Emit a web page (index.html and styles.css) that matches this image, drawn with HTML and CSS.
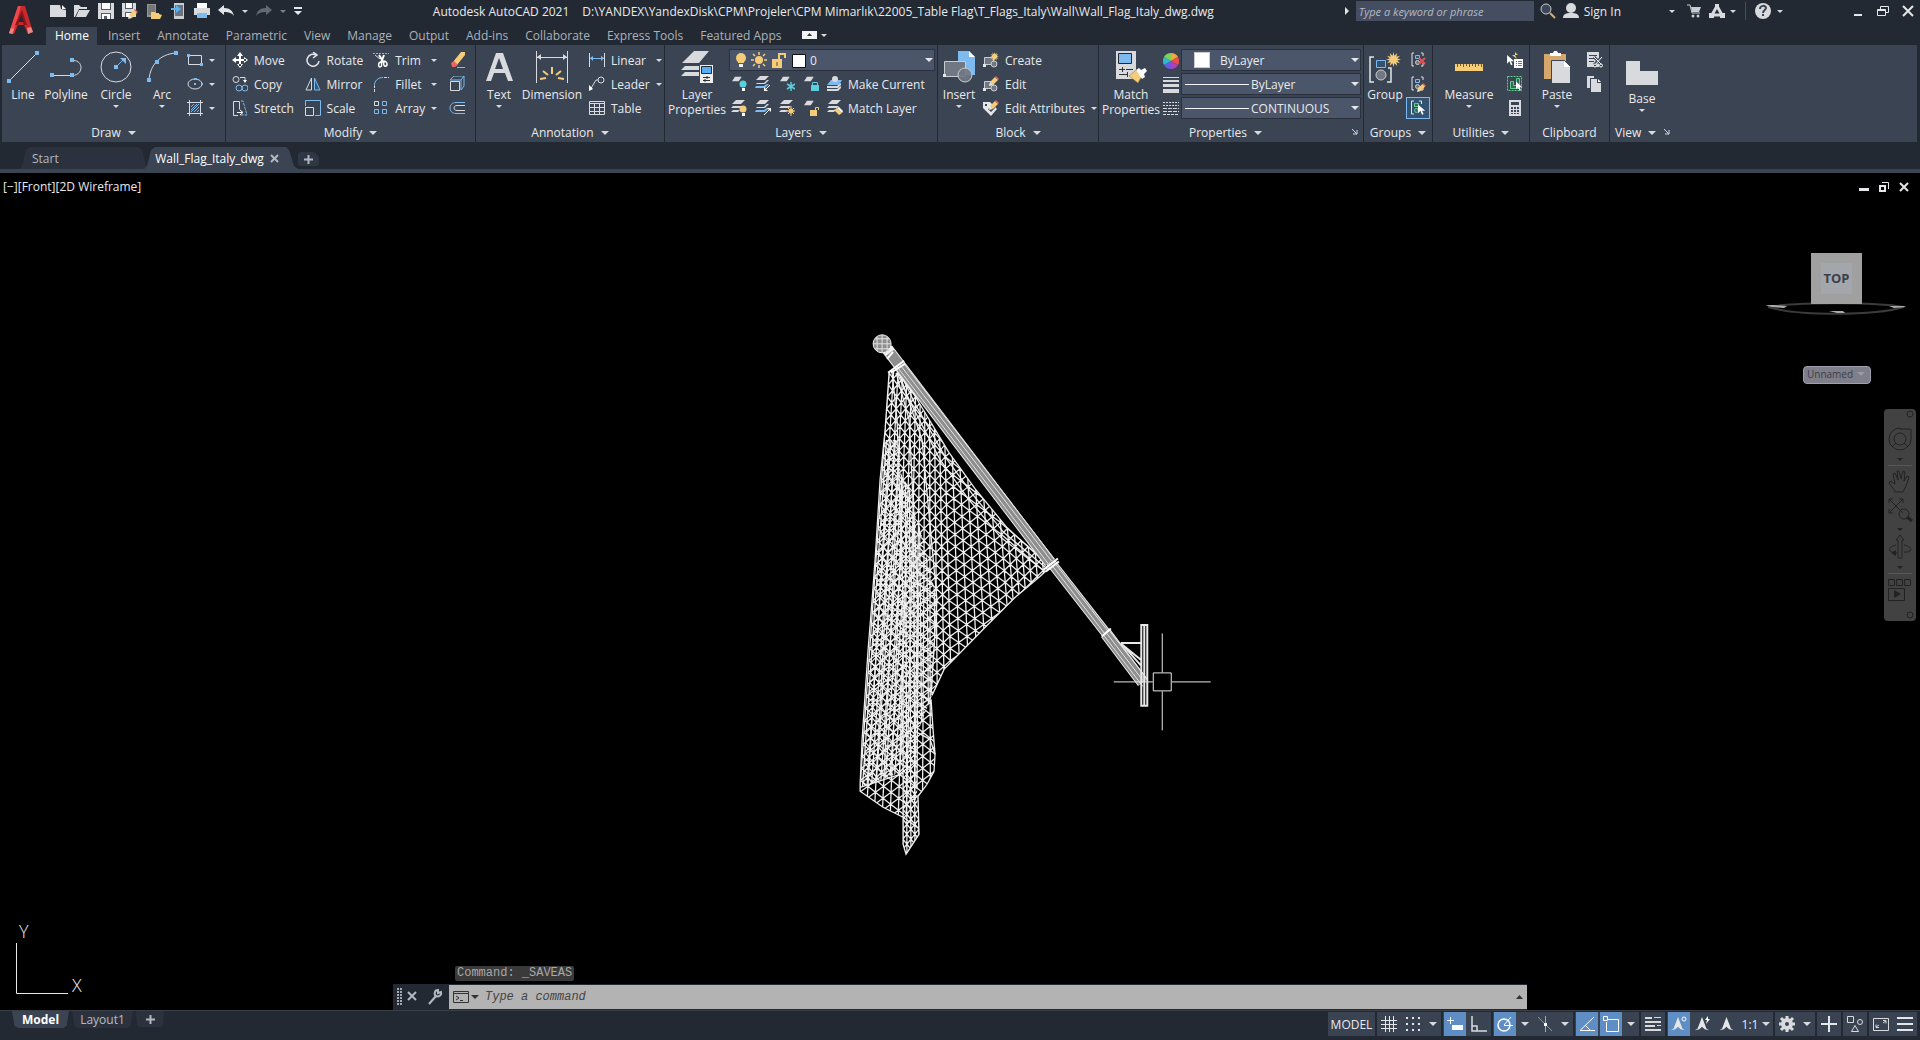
FILE: index.html
```html
<!DOCTYPE html>
<html lang="en">
<head>
<meta charset="utf-8">
<title>Autodesk AutoCAD 2021</title>
<link rel="stylesheet" href="styles.css">
</head>
<body>
<svg class="sprite" aria-hidden="true">
  <symbol id="sheet" viewBox="0 0 16 16"><path fill="#d8dade" d="M4 1h9L9 7H0z"/></symbol>
  <symbol id="stack" viewBox="0 0 16 16"><path fill="#d8dade" d="M5 0h9l-4 4H1zM2 6h10l-2 2H0zM2 10h7l-2 2H0z"/></symbol>
  <symbol id="stackblue" viewBox="0 0 16 16"><path fill="#d8dade" d="M5 0h9l-4 4H1z"/><path fill="#d8dade" d="M12 4h2l-4 4H1l1-1h7z"/><path fill="#7cbaf0" d="M12 8h2l-4 4H0l1-2h8z"/></symbol>
  <symbol id="pencil" viewBox="0 0 10 10"><path fill="#f5cd79" d="M1 6l5-5 3 3-5 5z"/><path fill="#ea6560" d="M6 1l1-1 3 3-1 1z"/><path fill="#f3ead6" d="M1 6l3 3-4 1z"/></symbol>
  <symbol id="cursor" viewBox="0 0 10 14"><path fill="#fff" d="M0 0v11l3-3 2 5 2-1-2-4h4z"/></symbol>
  <symbol id="burst" viewBox="0 0 16 16"><path fill="#f5cd79" d="M8 0l1 4 3-3-1 4 4-1-3 3 4 1-4 1 3 3-4-1 1 4-3-3-1 4-1-4-3 3 1-4-4 1 3-3-4-1 4-1-3-3 4 1-1-4 3 3z"/></symbol>
  <symbol id="group" viewBox="0 0 16 16"><path fill="none" stroke="#e4e6e9" d="M4 1H2v13h2M11 1h2v3M13 11v3h-2"/><path fill="#34526f" stroke="#7cbaf0" d="M5.500 3.500h4v3h-4z"/><circle cx="7.500" cy="10.500" r="2" fill="#777" stroke="#ccc"/></symbol>
  <symbol id="block" viewBox="0 0 16 16"><path fill="#727883" stroke="#c9ccd1" d="M1.500 5.500h9v7h-9z"/><circle cx="11" cy="12" r="3" fill="#727883" stroke="#c9ccd1"/><path fill="#e4e6e9" d="M0 12h3v3H0z"/></symbol>
  <symbol id="acad" viewBox="0 0 16 16"><path fill="#e4e6e9" d="M8 0l5 13 3 2-5-1-3-3-3 3-5 1 3-2z"/></symbol>
  <symbol id="launch" viewBox="0 0 6 6"><path fill="none" stroke="#d8dade" d="M0 0l5 5M5 1v4H1"/></symbol>
</svg>

<header class="top">
  <button class="logo" aria-label="Application menu">
    <svg width="28" height="30" viewBox="0 0 28 30"><path fill="#c9282d" d="M10 0h7l8 26-5 2-4-9h-6L6 28l-5-1z"/><path fill="#ec4a4e" d="M10 0h3L5 28l-4-1z"/><path fill="#8f1519" d="M14 4l5 15h-3l-3-7-3 7H7z"/><path fill="#222933" d="M13 9l3 7h-5z"/><path fill="#e88884" d="M3 22l3 1-2 5-3-1zM19 22l4-1 2 5-5 2z"/></svg>
  </button>
  <div class="titlebar">
    <div class="quick">
      <button aria-label="New"><svg width="16" height="16"><path fill="#d8dade" d="M0 2h10l1 4 5 1v7H0z"/><path fill="#fff" d="M12 2l4 4h-4z"/></svg></button>
      <button aria-label="Open"><svg width="16" height="16"><path fill="#d8dade" d="M0 2h5l2 2h6v2H5l-4 8H0z"/><path fill="#d8dade" d="M5 7h11l-4 7H2z"/></svg></button>
      <button aria-label="Save"><svg width="16" height="16"><path fill="#d8dade" d="M0 0h16v16H0z"/><path fill="#555c68" d="M3 0h10v7H3zM3 10h10v6H3z"/><path fill="#fff" d="M4 0h8v6H4zM4 11h8v5H4z"/><path fill="#555c68" d="M6 13h3v3H6z"/></svg></button>
      <button aria-label="Save as"><svg width="16" height="16"><path fill="#d8dade" d="M0 0h14v14H0z"/><path fill="#555c68" d="M3 0h8v6H3zM3 9h8v5H3z"/><path fill="#fff" d="M4 0h6v5H4zM4 10h5v4H4z"/><use href="#pencil" x="6" y="6" width="10" height="10"/></svg></button>
      <button aria-label="Open from web"><svg width="16" height="16"><path fill="#98958e" d="M1 1h9v13H1z"/><path fill="#777" d="M2 2h7v10H2z"/><path fill="#f5cd79" d="M5 9h4l1 1h3v1l3 1-2 4H5z"/></svg></button>
      <button aria-label="Save to web"><svg width="16" height="16"><path fill="#c9ccd1" d="M4 0h10v16H4z"/><path fill="#6c727c" d="M5 2h8v11H5z"/><path fill="#56b4f5" d="M1 5h5V2l5 4-5 4V7H1z"/></svg></button>
      <button aria-label="Plot"><svg width="16" height="16"><path fill="#fff" d="M3 0h10v5H3z"/><path fill="#d8dade" d="M0 5h16v7h-3v-2H3v2H0z"/><path fill="#7cbaf0" d="M3 10h10v5H3z"/></svg></button>
      <button aria-label="Undo"><svg width="16" height="16"><path fill="#e4e6e9" d="M6 2v3c6 0 9 3 10 8-2-3-5-4-10-4v3L0 7z"/></svg></button>
      <button class="drop" aria-label="Undo list"><i class="caret"></i></button>
      <button aria-label="Redo"><svg width="16" height="16"><path fill="#626973" d="M10 2v3C4 5 1 8 0 13c2-3 5-4 10-4v3l6-5z"/></svg></button>
      <button class="drop" aria-label="Redo list"><i class="caret dim"></i></button>
      <button aria-label="Customize quick access"><svg width="8" height="8"><path fill="#e4e6e9" d="M0 0h8v2H0zM0 4h8L4 8z"/></svg></button>
    </div>
    <h1 class="doc-title"><span>Autodesk AutoCAD 2021</span><span>D:\YANDEX\YandexDisk\CPM\Projeler\CPM Mimarlık\22005_Table Flag\T_Flags_Italy\Wall\Wall_Flag_Italy_dwg.dwg</span></h1>
    <div class="account">
      <svg width="4" height="8"><path fill="#e4e6e9" d="M0 0l4 4-4 4z"/></svg>
      <input class="search" type="text" aria-label="Search" placeholder="Type a keyword or phrase">
      <button class="find" aria-label="Find"><svg width="16" height="16"><circle cx="6" cy="6" r="5" fill="#3b4656" stroke="#c9ccd1"/><path stroke="#cdb184" stroke-width="2" d="M10 10l5 5"/></svg></button>
      <button class="sign"><svg width="16" height="16"><circle cx="8" cy="5" r="5" fill="#d8dade"/><path fill="#d8dade" d="M0 15c0-4 3-5 8-5s8 1 8 5z"/></svg>Sign In</button>
      <button class="drop signdrop" aria-label="Account list"><i class="caret"></i></button>
      <button class="cart" aria-label="App store"><svg width="14" height="14"><path fill="none" stroke="#c9ccd1" d="M0 1h3l2 8h8"/><path fill="#c9ccd1" d="M4 3h10l-2 5H5z"/><circle cx="6" cy="12" r="1.500" fill="#c9ccd1"/><circle cx="11" cy="12" r="1.500" fill="#c9ccd1"/></svg></button>
      <button class="auto" aria-label="Autodesk account"><svg width="16" height="14"><path fill="none" stroke="#d8dade" stroke-width="3" d="M8 2L3 11h10z"/><path fill="#d8dade" d="M0 9h5v5H0zM11 9h5v5h-5zM6 0h4v4H6z"/></svg></button>
      <button class="drop" aria-label="Autodesk account list"><i class="caret"></i></button>
      <span class="split"></span>
      <button aria-label="Help"><svg width="16" height="16"><circle cx="8" cy="8" r="8" fill="#d8dade"/><path fill="none" stroke="#3b4453" stroke-width="2" d="M5 6c0-4 6-4 6-1 0 2-3 2-3 5M8 11v2"/></svg></button>
      <button class="drop" aria-label="Help list"><i class="caret"></i></button>
    </div>
    <div class="window">
      <button aria-label="Minimize"><svg width="12" height="12"><path fill="#e4e6e9" d="M2 9h8v2H2z"/></svg></button>
      <button aria-label="Restore"><svg width="12" height="12"><path fill="none" stroke="#e4e6e9" d="M.500 4.500h8v6h-8zM.500 5.500h8M3.500 4V1.500h8v6H9"/></svg></button>
      <button aria-label="Close"><svg width="12" height="12"><path stroke="#e4e6e9" stroke-width="2" d="M1 1l10 10M11 1L1 11"/></svg></button>
    </div>
  </div>
  <nav class="tabs">
    <button class="on">Home</button><button>Insert</button><button>Annotate</button><button>Parametric</button><button>View</button><button>Manage</button><button>Output</button><button>Add-ins</button><button>Collaborate</button><button>Express Tools</button><button>Featured Apps</button>
    <button class="fold" aria-label="Minimize ribbon"><svg width="15" height="8"><path fill="#f2f3f4" d="M0 0h15v8H0z"/><path fill="#333" d="M5 5h5L7.500 2z"/></svg><i class="caret"></i></button>
  </nav>
</header>

<main class="ribbon">
  <section class="panel draw">
    <div class="tools">
      <button class="big w42"><svg width="32" height="32"><path stroke="#d8dade" d="M2 30L30 2"/><path fill="#7cbaf0" d="M0 28h4v4H0zM28 0h4v4h-4z"/></svg>Line</button>
      <button class="big w44"><svg width="32" height="32"><path fill="none" stroke="#d8dade" d="M2 24.500h20M22 9.500c12-1 12 15 0 15"/><path fill="#7cbaf0" d="M0 22h4v4H0zM20 22h4v4h-4zM20 7h4v4h-4z"/></svg>Polyline</button>
      <button class="big w56"><svg width="32" height="32"><circle cx="16" cy="16" r="15" fill="none" stroke="#d8dade"/><path fill="#7cbaf0" d="M14 14h4v4h-4zM20 7h6v6z"/><path stroke="#7cbaf0" d="M16 16l8-8"/></svg>Circle<i class="caret"></i></button>
      <button class="big w36"><svg width="32" height="32"><path fill="none" stroke="#d8dade" d="M3 29C4 14 14 3 30 2"/><path fill="#7cbaf0" d="M1 27h4v4H1zM9 9h4v4H9zM28 0h4v4h-4z"/></svg>Arc<i class="caret"></i></button>
      <div class="col c31">
        <button class="sm ico" aria-label="Rectangle"><svg width="16" height="16"><path fill="none" stroke="#d8dade" d="M1.500 3.500h13v9h-13z"/><path fill="#7cbaf0" d="M0 2h3v3H0zM13 11h3v3h-3z"/></svg><i class="caret"></i></button>
        <button class="sm ico" aria-label="Ellipse"><svg width="16" height="16"><ellipse cx="8" cy="8" rx="7" ry="5" fill="none" stroke="#d8dade"/><path fill="#7cbaf0" d="M7 7h2v2H7zM7 2h3v2H7zM14 7h2v2h-2z"/></svg><i class="caret"></i></button>
        <button class="sm ico" aria-label="Hatch"><svg width="16" height="16"><path fill="none" stroke="#d8dade" d="M2.500 0v16M13.500 0v16M0 2.500h16M0 13.500h16"/><path stroke="#7cbaf0" d="M4 7l3-3M4 10l6-6M4 12l8-8M7 12l5-5M10 12l2-2"/></svg><i class="caret"></i></button>
      </div>
    </div>
    <button class="name">Draw<i class="caret lg"></i></button>
  </section>

  <section class="panel modify">
    <div class="tools">
      <div class="col c73">
        <button class="sm"><svg width="16" height="16"><path fill="#fff" d="M7 2h2v12H7zM2 7h12v2H2zM8 0l3 4H5zM8 16l3-4H5zM0 8l4-3v6zM16 8l-4-3v6z"/></svg>Move</button>
        <button class="sm"><svg width="16" height="16"><circle cx="4" cy="3.500" r="3" fill="none" stroke="#d8dade"/><path fill="none" stroke="#d8dade" d="M8 1.500h5v3"/><path fill="#fff" d="M11 4h4l-2 3z"/><circle cx="7" cy="12" r="3" fill="none" stroke="#7cbaf0"/><circle cx="13" cy="12" r="3" fill="none" stroke="#7cbaf0"/></svg>Copy</button>
        <button class="sm"><svg width="16" height="16"><path fill="none" stroke="#d8dade" d="M6 15.500H1.500V1.500h6v8"/><path fill="none" stroke="#7cbaf0" stroke-dasharray="3 1" d="M9 1h2l4 14H8"/><path fill="none" stroke="#fff" d="M5 12.500h5M8 10l3 2.500L8 15"/></svg>Stretch</button>
      </div>
      <div class="col c68">
        <button class="sm"><svg width="16" height="16"><path fill="none" stroke="#e4e6e9" stroke-width="1.500" d="M11 3A6 6 0 1 0 14 9M8 0l4 3-4 3"/></svg>Rotate</button>
        <button class="sm"><svg width="16" height="16"><path fill="none" stroke="#d8dade" d="M6.500 2v12H1z"/><path fill="#33597c" stroke="#7cbaf0" d="M9.500 2v12H15z"/></svg>Mirror</button>
        <button class="sm"><svg width="16" height="16"><path fill="none" stroke="#7cbaf0" d="M.500 6V.500h15v15H10"/><path fill="none" stroke="#d8dade" d="M.500 7.500h8v8h-8z"/></svg>Scale</button>
      </div>
      <div class="col c67">
        <button class="sm"><svg width="16" height="16"><path stroke="#7cbaf0" stroke-dasharray="2 1" d="M0 1.500h16"/><path stroke="#fff" stroke-width="2" d="M6 3l5 8M11 3l-3 8"/><path fill="none" stroke="#fff" stroke-width="1.500" d="M8 10c-3 0-3 5-1 5s2-3 1-5M11 9c3 0 4 4 2 5s-3-2-2-5"/><path stroke="#d8dade" d="M2 3l5 4"/></svg>Trim<i class="caret"></i></button>
        <button class="sm"><svg width="16" height="16"><path fill="none" stroke="#7cbaf0" d="M1.500 10C1 5 5 1.500 10 1.500"/><path stroke="#d8dade" stroke-dasharray="3 1" d="M1.500 16v-6M11 1.500h5"/></svg>Fillet<i class="caret"></i></button>
        <button class="sm"><svg width="16" height="16"><path fill="none" stroke="#d8dade" d="M1.500 1.500h4v4h-4z"/><path fill="none" stroke="#7cbaf0" d="M9.500 1.500h4v4h-4zM1.500 9.500h4v4h-4zM9.500 9.500h4v4h-4z"/></svg>Array<i class="caret"></i></button>
      </div>
      <div class="col c26">
        <button class="sm ico" aria-label="Erase"><svg width="16" height="16"><path fill="#f5cd79" d="M4 10L12 0h4v3L8 13z"/><path fill="#ea6560" d="M2 11l3-2 4 4-3 2H3z"/><path stroke="#7cbaf0" d="M8 15.500h8"/></svg></button>
        <button class="sm ico" aria-label="Explode"><svg width="16" height="16"><path fill="none" stroke="#7cbaf0" d="M1 4l4-4h10v10l-3 4M1 4h11v10M12 4l3-4"/><path fill="#3b4453" stroke="#d8dade" d="M1.500 5.500h9v9h-9z"/></svg></button>
        <button class="sm ico" aria-label="Offset"><svg width="16" height="16"><path fill="none" stroke="#7cbaf0" d="M16 2.500H7c-8 0-8 11 0 11h9"/><path fill="none" stroke="#d8dade" d="M16 5.500H8c-4 0-4 5 0 5h8"/></svg></button>
      </div>
    </div>
    <button class="name">Modify<i class="caret lg"></i></button>
  </section>

  <section class="panel annotation">
    <div class="tools">
      <button class="big w46"><svg width="32" height="32"><path fill="#d8dade" fill-rule="evenodd" d="M13 2h7l10 28h-5l-3-8H11l-3 8H3zM16 7l-4 11h8z"/></svg>Text<i class="caret"></i></button>
      <button class="big w60"><svg width="32" height="32"><path stroke="#d8dade" d="M.500 0v32M31.500 0v32M1 6.500h30"/><path fill="#d8dade" d="M1 6l4-3v6zM31 6l-4-3v6z"/><path stroke="#f5cd79" stroke-width="2" d="M4 28l6-1M7 20l5 4M16 16v7M25 20l-5 4M28 28l-6-1"/></svg>Dimension</button>
      <div class="col c76">
        <button class="sm"><svg width="16" height="16"><path stroke="#d8dade" d="M.500 1v14M15.500 1v14"/><path stroke="#7cbaf0" d="M1 6.500h14"/><path fill="#7cbaf0" d="M1 6l3-2v5zM15 6l-3-2v5z"/></svg>Linear<i class="caret"></i></button>
        <button class="sm"><svg width="16" height="16"><circle cx="12" cy="4" r="3" fill="none" stroke="#d8dade"/><path fill="none" stroke="#d8dade" d="M9 4H7l-6 10"/><path fill="#fff" d="M0 15V9l4 4z"/></svg>Leader<i class="caret"></i></button>
        <button class="sm"><svg width="16" height="16"><path fill="none" stroke="#d8dade" d="M.500 1.500h15v13H.500zM0 3.500h16M0 7.500h16M0 11.500h16M5.500 4v11M10.500 4v11"/></svg>Table</button>
      </div>
    </div>
    <button class="name">Annotation<i class="caret lg"></i></button>
  </section>

  <section class="panel layers">
    <div class="tools">
      <button class="big w64"><svg width="32" height="32"><path fill="#d8dade" d="M13 0h15L18 12H1zM4 15h14v4H0zM4 21h14v4H0z"/><path fill="#eee" d="M19 14h13v18H19z"/><path fill="#56aef5" stroke="#222933" d="M20.500 15.500h10v7h-10z"/><path stroke="#333" d="M22 26.500h7M22 29.500h7M26 25v3M24 28v3"/></svg>Layer<br>Properties</button>
      <div class="stacked">
        <label class="combo wide"><svg width="78" height="20" viewBox="0 0 78 20"><circle cx="11" cy="8" r="5" fill="#f5cd79"/><path fill="#f5cd79" d="M8 10h6v3H8z"/><path fill="#eee" d="M9 14h4v3H9z"/><circle cx="29" cy="10" r="4" fill="#f5cd79"/><path stroke="#f5cd79" stroke-width="1.500" d="M29 2v3M29 15v3M21 10h3M34 10h3M23 4l2 2M35 4l-2 2M23 16l2-2M35 16l-2-2"/><path fill="#f5cd79" d="M42 9h10v9H42z"/><path fill="none" stroke="#f5cd79" stroke-width="2" d="M49 9V4h6v4"/><path fill="#fff" stroke="#111" d="M62.500 4.500h13v13h-13z"/><path stroke="#5b4a20" d="M47 12v4"/></svg><select aria-label="Layer"><option>0</option></select></label>
        <div class="strip">
          <button aria-label="Layer off"><svg width="16" height="16"><use href="#sheet" width="14" height="12"/><circle cx="12" cy="8" r="3.500" fill="#5bd0dc"/><path fill="#fff" d="M11 12h3v3h-3z"/></svg></button>
          <button aria-label="Isolate"><svg width="16" height="16"><use href="#stackblue" width="16" height="16"/><path stroke="#fff" d="M15 9l-5 5"/><path fill="#fff" d="M9 15v-4l4 4z"/></svg></button>
          <button aria-label="Freeze"><svg width="16" height="16"><use href="#sheet" width="14" height="12"/><path stroke="#5bd0dc" stroke-width="1.500" d="M12 6v9M8 8l8 5M8 13l8-5"/></svg></button>
          <button aria-label="Lock layer"><svg width="16" height="16"><use href="#sheet" width="14" height="12"/><path fill="#5bd0dc" d="M8 9h8v6H8z"/><path fill="none" stroke="#5bd0dc" d="M9.500 9V6.500h5V9"/></svg></button>
          <button class="txt"><svg width="16" height="16"><path fill="#7cbaf0" d="M4 4h11l-3 5H0z"/><path fill="#d8dade" d="M0 10h10l4-3v2l-3 3H0zM0 13h10l4-3v2l-3 3H0z"/><circle cx="8" cy="3" r="3" fill="#d8dade"/></svg>Make Current</button>
        </div>
        <div class="strip">
          <button aria-label="Turn all on"><svg width="16" height="16"><use href="#stack" width="16" height="16"/><circle cx="12" cy="9" r="3.500" fill="#f5cd79"/><path fill="#fff" d="M11 13h3v3h-3z"/></svg></button>
          <button aria-label="Unisolate"><svg width="16" height="16"><use href="#stackblue" width="16" height="16"/><path stroke="#fff" d="M9 15l5-5"/><path fill="#fff" d="M16 8v4l-4-4z"/></svg></button>
          <button aria-label="Thaw"><svg width="16" height="16"><use href="#stack" width="16" height="16"/><circle cx="12" cy="11" r="2.500" fill="#f5cd79"/><path stroke="#f5cd79" d="M12 6v10M7 11h9M9 8l6 6M9 14l6-6"/></svg></button>
          <button aria-label="Unlock layer"><svg width="16" height="16"><use href="#sheet" width="14" height="12"/><path fill="#f5cd79" d="M7 10h7v6H7z"/><path fill="none" stroke="#f5cd79" d="M12.500 10V7.500h3V10"/></svg></button>
          <button class="txt"><svg width="16" height="16"><use href="#stack" width="16" height="16"/><path fill="#f5cd79" d="M7 10l5 5 3-2-5-5z"/><path fill="#fff" d="M10 8l2-1 4 4-1 2z"/></svg>Match Layer</button>
        </div>
      </div>
    </div>
    <button class="name">Layers<i class="caret lg"></i></button>
  </section>

  <section class="panel blocks">
    <div class="tools">
      <button class="big w42"><svg width="32" height="32"><path fill="#7cbaf0" d="M15 0h11l6 6v18H15z"/><path fill="#fff" d="M26 0l6 6h-6z"/><path fill="#727883" stroke="#c9ccd1" d="M1.500 10.500h21v15h-21z"/><circle cx="22" cy="24" r="7" fill="#727883" fill-opacity=".9" stroke="#c9ccd1"/><path fill="#e4e6e9" d="M0 23h3v3H0z"/></svg>Insert<i class="caret"></i></button>
      <div class="col c115">
        <button class="sm"><svg width="16" height="16"><use href="#block" width="16" height="16"/><use href="#burst" x="7" y="0" width="9" height="9"/></svg>Create</button>
        <button class="sm"><svg width="16" height="16"><use href="#block" width="16" height="16"/><use href="#pencil" x="6" y="0" width="10" height="10"/></svg>Edit</button>
        <button class="sm"><svg width="16" height="16"><path fill="#e4e6e9" d="M0 2h7l7 7-6 7-8-8z"/><path fill="#3b4453" d="M2 4h2v2H2zM5 9l3 3 4-4-1-2z"/><use href="#pencil" x="6" y="0" width="10" height="10"/></svg>Edit Attributes<i class="caret"></i></button>
      </div>
    </div>
    <button class="name">Block<i class="caret lg"></i></button>
  </section>

  <section class="panel props">
    <div class="tools">
      <button class="big w64"><svg width="32" height="32"><path fill="#d8dade" d="M1 0h20v28H1z"/><path fill="#7cbaf0" stroke="#222933" d="M3.500 2.500h13v10h-13z"/><path stroke="#333" d="M4 18.500h6M11 18.500h7M4 23.500h9M7.500 16v5M12.500 21v5"/><path fill="#f5cd79" stroke="#8d6b35" stroke-width=".5" d="M14 25l7-6 6 6-4 7z"/><path fill="#fff" d="M21 19l3-2 2 2 4-2 2 3-3 3 1 3-3 2z"/></svg>Match<br>Properties</button>
      <div class="icons">
        <svg width="16" height="16"><path fill="#f4a53c" d="M8 8V0a8 8 0 0 1 7 4z"/><path fill="#e94f4f" d="M8 8l7-4a8 8 0 0 1 0 8z"/><path fill="#b03fb5" d="M8 8l7 4a8 8 0 0 1-7 4z"/><path fill="#6f56e0" d="M8 8v8a8 8 0 0 1-7-4z"/><path fill="#2fb7cf" d="M8 8l-7 4a8 8 0 0 1 0-8z"/><path fill="#7fcf5b" d="M8 8L1 4a8 8 0 0 1 7-4z"/></svg>
        <svg width="16" height="16"><path fill="#d8dade" d="M0 0h16v1H0zM0 3h16v2H0zM0 7h16v3H0zM0 12h16v4H0z"/></svg>
        <svg width="16" height="16"><path stroke="#d8dade" stroke-dasharray="2 1" d="M0 1.500h16M0 4.500h16"/><path stroke="#d8dade" stroke-dasharray="4 1" d="M0 7.500h16M0 10.500h16"/><path stroke="#d8dade" stroke-dasharray="3 1" d="M0 13.500h16"/></svg>
      </div>
      <div class="stacked selects">
        <label class="combo"><span class="chip"></span><select aria-label="Object color"><option>ByLayer</option></select></label>
        <label class="combo"><span class="rule"></span><select aria-label="Lineweight"><option>ByLayer</option></select></label>
        <label class="combo"><span class="rule"></span><select aria-label="Linetype"><option>CONTINUOUS</option></select></label>
      </div>
    </div>
    <div class="foot"><button class="name">Properties<i class="caret lg"></i></button><button class="launch" aria-label="Properties palette"><svg width="6" height="6"><use href="#launch"/></svg></button></div>
  </section>

  <section class="panel groups">
    <div class="tools">
      <button class="big w42"><svg width="32" height="32"><path fill="none" stroke="#e4e6e9" stroke-width="1.500" d="M5 6H1v25h4M19 17h3v14h-4"/><path fill="#34526f" stroke="#7cbaf0" d="M7.500 9.500h9v7h-9z"/><circle cx="12" cy="24" r="5" fill="#727883" stroke="#c9ccd1"/><use href="#burst" x="17" y="1" width="15" height="15"/></svg>Group</button>
      <div class="col c26">
        <button class="sm ico" aria-label="Ungroup"><svg width="16" height="16"><use href="#group" width="16" height="16"/><path stroke="#ea4f4f" stroke-width="2" d="M9 6l6 6M15 6l-6 6"/></svg></button>
        <button class="sm ico" aria-label="Group edit"><svg width="16" height="16"><use href="#group" width="16" height="16"/><use href="#pencil" x="7" y="7" width="9" height="9"/></svg></button>
        <button class="sm ico on" aria-label="Group selection"><svg width="16" height="16"><path fill="none" stroke="#e4e6e9" d="M4 1H1.500v13H4M9 1h2.500v3"/><path fill="#2f6b55" stroke="#5fcf8d" d="M4.500 3.500h4v3h-4z"/><circle cx="6.500" cy="10.500" r="2" fill="#2f6b55" stroke="#5fcf8d"/><use href="#cursor" x="8" y="4" width="8" height="12"/></svg></button>
      </div>
    </div>
    <button class="name">Groups<i class="caret lg"></i></button>
  </section>

  <section class="panel utils">
    <div class="tools">
      <button class="big w72"><svg width="32" height="32"><path fill="#f5cd79" d="M2 13h28v7H2z"/><path stroke="#6b5a34" d="M4.500 13v3M7.500 13v2M10.500 13v3M13.500 13v2M16.500 13v3M19.500 13v2M22.500 13v3M25.500 13v2M28.500 13v3"/></svg>Measure<i class="caret"></i></button>
      <div class="col c24">
        <button class="sm ico" aria-label="Quick select"><svg width="16" height="16"><path fill="#f5cd79" d="M8 0l3 3h-3l2 4-5-4h3z"/><use href="#cursor" x="0" y="3" width="8" height="11"/><path fill="#fff" d="M7 7h9v9H7z"/><path stroke="#3d7fc4" d="M9 9.500h1M9 11.500h1M9 13.500h1M11 9.500h4M11 11.500h4M11 13.500h4"/></svg></button>
        <button class="sm ico" aria-label="Select all"><svg width="16" height="16"><path fill="none" stroke="#5fcf8d" stroke-dasharray="2 1" d="M.500 .500h14v14H.500z"/><path fill="#2f6b55" stroke="#5fcf8d" d="M3.500 5.500h3v4h3v-7h3v10h-9z"/><use href="#cursor" x="9" y="5" width="7" height="11"/></svg></button>
        <button class="sm ico" aria-label="Calculator"><svg width="16" height="16"><path fill="#d8dade" d="M2 0h12v16H2z"/><path fill="#3b4453" d="M4 2h8v3H4zM4 7h2v2H4zM7 7h2v2H7zM10 7h2v2h-2zM4 10h2v2H4zM7 10h2v2H7zM10 10h2v2h-2zM4 13h2v1H4zM7 13h2v1H7zM10 13h2v1h-2z"/></svg></button>
      </div>
    </div>
    <button class="name">Utilities<i class="caret lg"></i></button>
  </section>

  <section class="panel clip">
    <div class="tools">
      <button class="big w54"><svg width="32" height="32"><path fill="#d6a76c" d="M3 3h22v25H3z"/><path fill="#fff" d="M9 2h3l1-2h3l1 2h3v3H9z"/><path fill="#d8dade" stroke="#3b4453" d="M10.500 9.500h13l6 6v17h-19z"/><path fill="#fff" d="M23 10l6 6h-6z"/></svg>Paste<i class="caret"></i></button>
      <div class="col c24">
        <button class="sm ico" aria-label="Cut"><svg width="16" height="16"><path fill="#d8dade" d="M0 0h12v15H0z"/><path stroke="#3b4453" d="M2 3.500h8M2 6.500h5M2 9.500h5"/><path stroke="#3b4453" stroke-width="3" d="M7 5l8 8M15 5l-8 8"/><path stroke="#fff" d="M7 5l7 7M15 5l-7 8"/><circle cx="8" cy="13.500" r="1.500" fill="#3b4453" stroke="#fff"/><circle cx="14" cy="13.500" r="1.500" fill="#3b4453" stroke="#fff"/></svg></button>
        <button class="sm ico" aria-label="Copy clip"><svg width="16" height="16"><path fill="#d8dade" d="M0 0h7v2H3v10H0z"/><path fill="#d8dade" d="M4 3h6v4h4v9H4z"/><path fill="#fff" d="M11 3l3 3h-3z"/></svg></button>
      </div>
    </div>
    <span class="name">Clipboard</span>
  </section>

  <section class="panel views">
    <div class="tools">
      <button class="big base w64"><svg width="32" height="36"><path fill="#d8dade" d="M0 10h14v10h18v14H0z"/></svg>Base<i class="caret"></i></button>
    </div>
    <div class="foot"><button class="name">View<i class="caret lg"></i></button><button class="launch" aria-label="View settings"><svg width="6" height="6"><use href="#launch"/></svg></button></div>
  </section>
</main>

<nav class="files">
  <button class="file start">Start</button>
  <button class="file open">Wall_Flag_Italy_dwg<svg width="9" height="9"><path stroke="#b4b8be" stroke-width="2" d="M1 1l7 7M8 1L1 8"/></svg></button>
  <button class="file plus" aria-label="New drawing"><svg width="9" height="9"><path stroke="#b4b8be" stroke-width="2" d="M4.500 0v9M0 4.500h9"/></svg></button>
</nav>

<section class="viewport">
  <svg class="model" viewBox="0 173 1920 838" aria-label="Flag wireframe">
    <defs>
      <clipPath id="cut-front"><path d="M889 373L905 370 919 403 949 453 975 489 1007 528 1052 566 1040 577 1015 598 983 630 944 670 932 696 931 700 933 730 935 755 934 772 927 785 918 797 903 818 883 808 860 792 862 740 868 650 872 600 875 560 880 480 885 430z"/></clipPath>
      <clipPath id="cut-back"><path d="M884 440H900L903 600V772L862 788 860 785 862 740 868 650 872 600 875 560 880 480z"/></clipPath>
      <clipPath id="cut-fold"><path d="M899 470L915 500 919 600 917 790 919 820 919 835 906 855 903 845V600z"/></clipPath>
      <clipPath id="cut-side"><path d="M918 520L937 600 932 696 918 732z"/></clipPath>
    </defs>
    <g class="wire">
      <path id="front" clip-path="url(#cut-front)"/>
      <path id="back" clip-path="url(#cut-back)"/>
      <path id="fold" clip-path="url(#cut-fold)"/>
      <path id="side" clip-path="url(#cut-side)"/>
      <path d="M889 373L885 430 880 480 875 560 872 600 868 650 862 740 860 785 860 792 883 808 903 818 917 828M903 600V845L906 855 919 835 918 797 927 785 934 772 935 755 933 730 931 700M932 696L944 670 983 630 1015 598 1040 577 1052 566M903 373L919 403 949 453 975 489 1007 528 1050 567M900 373L915 404 945 457 972 494 1004 533 1048 570M897 373L911 404 940 460 968 499 1001 538 1045 572M860 788L903 774"/>
      <path d="M892 373L897 420 903 600M896 373L909 420 918 600 917 790M899 373L922 440 937 600 931 696M917 733L930 740 935 755"/>
    </g>
    <g class="pole">
      <path class="tube" d="M887 349L1050 563"/><path class="core" d="M890 353L1050 563"/>
      <path class="ribs" d="M904 364L1055 560M900 365L1052 562M897 367L1049 565"/>
      <path class="tube thin" d="M1051 563L1108 636"/><path class="core thin" d="M1051 563L1108 636"/>
      <path class="ribs" d="M1053 561L1110 634M1050 563L1107 637"/>
      <path class="tube" d="M1106 634L1143 683"/><path class="core" d="M1106 634L1143 683"/>
      <path class="ribs" d="M1110 632L1143 674M1107 634L1143 681M1104 636L1143 687"/>
      <path class="collar" d="M888 373L904 361M891 373L905 364M887 359L893 352M1044 570L1058 559M1046 572L1059 562M1102 637L1111 629"/>
      <circle cx="882" cy="344" r="9" class="knob"/>
      <path class="ribs" d="M873 344h18M882 335v18M875 339h14M875 349h14M877 337v14M887 337v14"/>
    </g>
    <g class="bracket">
      <path d="M1141.500 625.500h6v81h-6zM1144.500 626v80M1121 643.500h20M1121 644L1142 661M1124 647L1142 667"/>
      <path class="cross" d="M1114 682.500h39M1172 682.500h39M1162.500 634v39M1162.500 692v39M1153.500 673.500h18v18h-18z"/>
    </g>
  </svg>
  <div class="viewtools">
    <div class="labels"><button>[−]</button><button>[Front]</button><button>[2D Wireframe]</button></div>
    <div class="docwin">
      <button aria-label="Minimize drawing"><svg width="10" height="10"><path fill="#e4e6e9" d="M0 6h10v3H0z"/></svg></button>
      <button aria-label="Restore drawing"><svg width="10" height="10"><path fill="none" stroke="#e4e6e9" stroke-width="2" d="M1 4h5v5H1z"/><path fill="none" stroke="#e4e6e9" d="M3 .500h6.500V7"/></svg></button>
      <button aria-label="Close drawing"><svg width="10" height="10"><path stroke="#e4e6e9" stroke-width="2" d="M1 1l8 8M9 1L1 9"/></svg></button>
    </div>
  </div>
  <div class="cube">
    <svg width="142" height="14"><path fill="none" stroke="#3b3b3b" stroke-width="2" d="M3 6c30 9 106 9 136 0C110 1 32 1 3 6"/><path fill="#aaa" d="M0 4h9l13 1-3 2-12-1zM64 10h14l2 2h-8zM124 5l15 0 2 1-12 1z"/></svg>
    <button>TOP</button>
  </div>
  <button class="ucsname">Unnamed<i class="caret lg"></i></button>
  <div class="navbar">
    <svg width="32" height="212" viewBox="0 0 32 212"><g fill="none" stroke="#222"><circle cx="26" cy="5" r="3"/><path d="M16 20h11v10a11 11 0 1 1-11-11z"/><circle cx="16" cy="30" r="6"/><path d="M8 38l4-4M24 38l-4-4"/><path d="M11 82l-6-8 1-2 5 3-2-10 2-1 3 7-1-9h2l2 8 2-8 2 1-1 9 3-5 2 1-3 9-3 6h-8z"/><path d="M5 90l14 14M19 90L5 104M5 94v-4h4M15 90h4v4M5 100v4h4"/><circle cx="20" cy="105" r="5"/><path stroke-width="3" d="M23 108l5 4"/><path d="M14 131h-2l4-5 4 5h-2v18h-4z"/><path d="M12 136c-10 3-8 7 1 8M20 136c10 2 8 8 0 7"/><path d="M4.500 170.500h6v6h-6zM12.500 170.500h6v6h-6zM20.500 170.500h6v6h-6zM4.500 179.500h16v12h-16z"/><circle cx="26" cy="206" r="3"/></g><path fill="#222" d="M13 49h6l-3 3zM13 119h6l-3 3zM13 157h6l-3 3zM10 181l7 4-7 4zM7 144l5-3v6z"/><path stroke="#575757" d="M4 56.500h24M4 164.500h24"/></svg>
  </div>
  <div class="ucs">
    <svg width="52" height="51"><path fill="none" stroke="#e8e8e8" d="M.500 0v50.500H52"/></svg>
    <span class="ay">Y</span><span class="ax">X</span>
  </div>
  <div class="command">
    <output>Command: _SAVEAS</output>
    <div class="line">
      <svg width="56" height="26"><path stroke="#a6a9ae" stroke-width="2" stroke-dasharray="2 1" d="M5 4v18M8 4v18"/><path stroke="#b4b8be" stroke-width="2" d="M15 8l8 8M23 8l-8 8"/><path stroke="#b4b8be" stroke-width="2" d="M36 20l7-8"/><path fill="none" stroke="#b4b8be" stroke-width="2" d="M45 6c-4 0-4 5-2 6s6 0 5-4l-3 1z"/></svg>
      <div class="entry">
        <svg width="26" height="12"><path fill="none" stroke="#333" d="M.500 .500h15v11H.500zM0 2.500h16M3 5l3 2-3 2M7 9.500h3"/><path fill="#333" d="M18 4h8l-4 4z"/></svg>
        <input type="text" aria-label="Command line" placeholder="Type a command">
        <svg width="8" height="5"><path fill="#333" d="M0 4h7L3.500 0z"/></svg>
      </div>
    </div>
  </div>
</section>

<footer class="status">
  <div class="layouts"><button class="on">Model</button><button>Layout1</button><button class="add" aria-label="New layout"><svg width="9" height="9"><path stroke="#b4b8be" stroke-width="2" d="M4.500 0v9M0 4.500h9"/></svg></button></div>
  <div class="modes">
    <div class="set"><button class="label">MODEL</button></div>
    <div class="set">
      <button aria-label="Grid"><svg width="16" height="16"><path stroke="#e4e6e9" d="M4.500 0v16M8.500 0v16M12.500 0v16M0 4.500h16M0 8.500h16M0 12.500h16"/></svg></button>
      <button aria-label="Snap"><svg width="16" height="16"><path stroke="#e4e6e9" stroke-width="2" stroke-dasharray="2 4" d="M1 2h14M1 8h14M1 14h14"/></svg></button>
      <button class="dd" aria-label="Snap settings"><i class="caret lg"></i></button>
    </div>
    <div class="set">
      <button class="act" aria-label="Dynamic input"><svg width="16" height="16"><path stroke="#fff" d="M3.500 1v7M0 4.500h7"/><path fill="#fff" d="M5 9h11v5H5z"/></svg></button>
      <button aria-label="Ortho"><svg width="16" height="16"><path fill="none" stroke="#d8dade" stroke-width="1.500" d="M1 0v15h15M1 10h5v5"/></svg></button>
    </div>
    <div class="set">
      <button class="act" aria-label="Polar tracking"><svg width="16" height="16"><circle cx="7" cy="9" r="6" fill="none" stroke="#fff" stroke-width="1.500"/><path fill="none" stroke="#fff" d="M7 9.500h9M7 9l7-8"/></svg></button>
      <button class="dd" aria-label="Polar settings"><i class="caret lg"></i></button>
      <button aria-label="Isometric drafting"><svg width="16" height="16"><path stroke="#e86f7d" d="M1 1l14 14"/><path stroke="#5fcf8d" d="M8.500 0v16"/><path fill="#fff" d="M7 7h3v3H7z"/></svg></button>
      <button class="dd" aria-label="Isometric settings"><i class="caret lg"></i></button>
    </div>
    <div class="set">
      <button class="act" aria-label="Object snap tracking"><svg width="16" height="16"><path fill="none" stroke="#fff" d="M15 1L1 14.500h15M6 9l5 5"/></svg></button>
      <button class="act" aria-label="Object snap"><svg width="16" height="16"><path fill="none" stroke="#fff" d="M5 3.500h10.500v12h-12V6"/><path fill="none" stroke="#fff" d="M.500 .500h4v4h-4z"/></svg></button>
      <button class="dd" aria-label="Snap modes"><i class="caret lg"></i></button>
    </div>
    <div class="set"><button aria-label="Lineweight display"><svg width="16" height="16"><path fill="#d8dade" d="M0 1h7v2H0zM9 1h7v1H9zM0 5h16v2H0zM0 9h10v2H0zM12 9h4v1h-4zM0 13h16v2H0z"/></svg></button></div>
    <div class="set">
      <button class="act" aria-label="Annotation visibility"><svg width="16" height="16"><use href="#acad" width="14" height="16"/><circle cx="13" cy="3" r="2" fill="none" stroke="#fff"/></svg></button>
      <button aria-label="Auto scale"><svg width="16" height="16"><use href="#acad" width="14" height="16"/><path fill="#fff" d="M13 0l-3 4h2l-1 4 4-5h-2z"/></svg></button>
      <button aria-label="Annotation scale icon"><svg width="16" height="16"><use href="#acad" y="1" width="15" height="14"/></svg></button>
      <button class="scale">1:1<i class="caret lg"></i></button>
    </div>
    <div class="set"><button aria-label="Workspace"><svg width="16" height="16"><circle cx="8" cy="8" r="4" fill="none" stroke="#d8dade" stroke-width="4"/><path stroke="#d8dade" stroke-width="3" d="M8 0v3M8 13v3M0 8h3M13 8h3M2 2l3 3M14 14l-3-3M14 2l-3 3M2 14l3-3"/></svg></button><button class="dd" aria-label="Workspace list"><i class="caret lg"></i></button></div>
    <div class="set"><button aria-label="Annotation monitor"><svg width="16" height="16"><path stroke="#e4e6e9" stroke-width="2" d="M8 0v16M0 8h16"/></svg></button></div>
    <div class="set"><button aria-label="Isolate objects"><svg width="16" height="16"><path fill="none" stroke="#d8dade" d="M.500 .500h6v6h-6zM8 9.500l3.500 6h-7z"/><circle cx="13" cy="6" r="2.500" fill="none" stroke="#d8dade"/></svg></button></div>
    <div class="set">
      <button aria-label="Clean screen"><svg width="16" height="16"><path fill="none" stroke="#d8dade" d="M.500 2.500h15v12H.500zM3 11l3-2M13 5l-3 2M3 8.500v3h3M10 4.500h3v3"/></svg></button>
      <button aria-label="Customization"><svg width="16" height="16"><path fill="#e4e6e9" d="M0 1h16v2H0zM0 7h16v2H0zM0 13h16v2H0z"/></svg></button>
    </div>
  </div>
</footer>
<script src="wireframe.js"></script>
</body>
</html>
```
FILE: styles.css
```css
* { box-sizing: border-box; }
body {
  margin: 0;
  height: 100vh;
  min-height: 700px;
  display: flex;
  flex-direction: column;
  background: #222933;
  color: #e8eaed;
  font: 12px/15px "Open Sans", "Noto Sans", sans-serif;
  overflow-x: hidden;
}
button {
  font: inherit;
  color: inherit;
  background: none;
  border: 0;
  padding: 0;
  display: flex;
  align-items: center;
  justify-content: center;
  flex: none;
  white-space: nowrap;
}
svg { flex: none; display: block; }
.sprite { position: absolute; width: 0; height: 0; }
.caret {
  flex: none;
  border: 3px solid transparent;
  border-top-color: #d8dade;
  border-bottom: 0;
}
.caret.lg { border-width: 4px 4px 0; }
.caret.dim { border-top-color: #7a808a; }

/* title bar and ribbon tabs */
.top { flex: none; display: grid; grid-template-columns: 46px 1fr; grid-template-rows: 27px 18px; }
.logo { grid-row: 1 / 3; justify-content: flex-start; padding: 0 0 4px 8px; }
.titlebar { display: flex; align-items: flex-start; height: 22px; }
.titlebar > * { height: 22px; display: flex; align-items: center; }
.quick { padding-left: 4px; gap: 8px; }
.quick .drop { margin: 0 -1px; width: 8px; }
.doc-title { flex: 1; justify-content: center; gap: 13px; margin: 0; font-size: 12px; font-weight: 400; white-space: nowrap; padding-top: 1px; min-width: 0; }
.search {
  width: 178px;
  height: 20px;
  margin: 0 6px 0 7px;
  padding: 0 3px;
  border: 0;
  background: #454e60;
  color: #e8eaed;
  font: italic 11px/15px "Open Sans", sans-serif;
}
.search::placeholder { color: #b4b8c0; opacity: 1; }
.sign { gap: 5px; margin-left: 7px; }
.signdrop { margin-left: 48px; }
.cart { margin-left: 12px; }
.auto { margin: 0 5px 0 8px; }
.split { width: 1px; height: 18px; background: #474e5a; margin: 0 9px; }
.account .drop:last-child { margin-left: 6px; }
.window { gap: 13px; padding: 0 6px 0 69px; }
.tabs { display: flex; color: #adb1b8; }
.tabs button { padding: 0 8px 2px 9px; }
.tabs .on { padding: 0 8px 2px 9px; margin-right: 2px; background: #3b4453; color: #fff; }
.tabs .fold { padding: 0 12px 2px; gap: 4px; }

/* ribbon */
.ribbon { flex: none; display: flex; height: 97px; padding: 0 2px; }
.panel { flex: none; display: flex; flex-direction: column; background: #3b4453; border-right: 1px solid #222933; padding-top: 4px; }
.tools { display: flex; height: 72px; }
.name { height: 21px; gap: 7px; width: 100%; display: flex; align-items: center; justify-content: center; padding-top: 2px; }
.draw { width: 224px; }
.modify { width: 250px; }
.annotation { width: 189px; }
.layers { width: 273px; }
.blocks { width: 161px; }
.props { width: 265px; }
.groups { width: 69px; }
.utils { width: 97px; }
.clip { width: 80px; }
.views { flex: 1; }
.modify .tools { padding-left: 6px; }
.big { flex-direction: column; justify-content: flex-start; padding-top: 2px; }
.big svg { margin-bottom: 4px; }
.big .caret { margin-top: 3px; }
.w36 { width: 36px; } .w42 { width: 42px; } .w44 { width: 44px; } .w46 { width: 46px; }
.w54 { width: 54px; } .w56 { width: 56px; } .w60 { width: 60px; } .w64 { width: 64px; } .w72 { width: 72px; }
.col { display: grid; grid-template-rows: repeat(3, 24px); }
.sm { gap: 6px; justify-content: flex-start; width: 100%; padding-bottom: 2px; }
.sm .caret { margin-left: auto; }
.c31 { width: 35px; margin-left: 7px; padding-right: 7px; }
.c73 { width: 73px; } .c68 { width: 69px; } .c67 { width: 67px; padding-right: 4px; }
.modify .c26 { margin-left: 9px; }
.c26, .c24 { width: 26px; }
.c76 { width: 67px; margin-left: 7px; }
.c115 { width: 112px; margin-left: 3px; padding-right: 3px; }
.sm.on { width: 24px; height: 22px; margin-left: -4px; padding: 0; border: 1px solid #7cbaf0; background: #345373; justify-content: center; }
.groups .c26 { margin-left: 4px; }
.utils .c24 { margin-left: 2px; }
.clip .c24 { margin-left: 3px; }
.stacked { flex: 1; display: grid; grid-template-rows: repeat(3, 24px); padding-right: 2px; }
.strip { display: flex; align-items: center; gap: 8px; padding: 0 0 2px 2px; }
.txt { gap: 5px; }
.combo { position: relative; display: flex; align-items: center; height: 22px; background: #4b566a; border: 1px solid #2a313c; }
.combo::after { content: ""; position: absolute; right: 1px; top: 8px; border: 4px solid transparent; border-top-color: #e4e6e9; border-bottom: 0; pointer-events: none; }
.combo select { flex: 1; min-width: 0; height: 20px; appearance: none; background: none; border: 0; padding: 0 0 0 2px; color: #e8eaed; font: inherit; }
.chip { width: 16px; height: 16px; background: #fff; border: 1px solid #ccc; margin: 0 8px 0 12px; }
.rule { width: 64px; height: 1px; background: #f2f3f4; margin-left: 3px; }
.icons { display: grid; grid-template-rows: repeat(3, 24px); align-items: center; width: 18px; padding-bottom: 1px; }
.foot { display: flex; align-items: center; }
.foot .launch { margin-right: 5px; }
.props .name { flex: 1; }
.views .name { width: auto; padding-left: 5px; margin-right: 8px; }

/* drawing tabs */
.files { flex: none; display: flex; height: 31px; padding: 5px 0 4px 20px; background: linear-gradient(#222933 27px, #3b4453 27px); }
.file { height: 22px; }
.start { width: 128px; margin-right: -4px; padding-left: 12px; justify-content: flex-start; color: #b4b8be; background: #2b323e; clip-path: polygon(0 100%, 2px 86%, 6px 14%, 10px 0, 118px 0, 122px 14%, 126px 86%, 128px 100%); }
.open { gap: 6px; width: 154px; padding-right: 8px; background: #3b4453; color: #fff; clip-path: polygon(0 100%, 3px 86%, 7px 14%, 11px 0, 142px 0, 145px 14%, 150px 86%, 154px 100%); }
.plus { width: 21px; height: 14px; margin-top: 5px; border-radius: 3px 8px 3px 3px; background: #2f3744; }

/* drawing area */
.viewport { position: relative; flex: 1; min-height: 0; background: #000; border-bottom: 1px solid #3a3f47; overflow: hidden; }
.model { position: absolute; inset: 0; width: 100%; height: 100%; }
.wire path { fill: none; stroke: #eee; stroke-width: 1.3; }
.tube { fill: none; stroke: #efefef; stroke-width: 12; }
.core { fill: none; stroke: #8e8e8e; stroke-width: 10; }
.tube.thin { stroke-width: 10; }
.core.thin { stroke-width: 8; }
.ribs { fill: none; stroke: #e2e2e2; stroke-width: 1; }
.collar { fill: none; stroke: #fff; stroke-width: 2; }
.knob { fill: #8e8e8e; stroke: #efefef; }
.bracket path { fill: none; stroke: #e8e8e8; stroke-width: 1; }
.bracket path:first-child { stroke-width: 2; }
.viewtools { position: relative; display: flex; justify-content: space-between; padding: 6px 11px 0 3px; }
.labels, .docwin { display: flex; }
.docwin { gap: 10px; padding-top: 1px; }
.cube { position: absolute; right: 13px; top: 80px; width: 142px; height: 62px; }
.cube svg { position: absolute; left: 0; bottom: 0; }
.cube button { position: absolute; left: 46px; top: 0; width: 51px; height: 51px; background: #a0a0a0; border: 10px solid #a0a0a0; color: #3c4046; font-weight: 700; font-size: 13px; box-shadow: inset 0 0 0 16px #a3a7ac; }
.ucsname { position: absolute; right: 49px; top: 193px; width: 68px; height: 18px; padding: 0 5px 2px 3px; justify-content: space-between; border: 1px solid #a0a0ac; border-radius: 4px; background: #7f7f8b; color: #3c3c46; font: 10px/15px "Open Sans", sans-serif; }
.ucsname .caret { border-top-color: #9a9aa6; }
.navbar { position: absolute; right: 4px; top: 236px; width: 32px; height: 212px; border-radius: 4px; background: #424242; }
.ucs { position: absolute; left: 16px; bottom: 16px; width: 80px; height: 72px; font: 300 18px/18px "Open Sans", sans-serif; }
.ucs svg { position: absolute; left: 0; bottom: 0; }
.ucs span { position: absolute; }
.ay { left: 3px; top: 0; }
.ax { left: 56px; bottom: 0; }
.command { position: absolute; left: 393px; right: 393px; bottom: 0; font: 12px/15px "Liberation Mono", monospace; }
.command output { display: table; margin: 0 0 3px 62px; padding: 0 2px; border-radius: 2px; background: #3a3a3a; color: #a8a8a8; }
.line { display: flex; height: 26px; background: #222933; }
.entry { flex: 1; display: flex; align-items: center; margin: 1px 0; padding: 0 3px 0 4px; background: #b3b3b3; }
.entry input { flex: 1; border: 0; background: none; padding: 0 6px; font: italic 12px/15px "Liberation Mono", monospace; }
.entry input::placeholder { color: #444; opacity: 1; }

/* status bar */
.status { flex: none; display: flex; justify-content: space-between; height: 29px; }
.layouts { display: flex; padding-left: 12px; gap: 3px; height: 17px; color: #b8bcc2; }
.layouts button { width: 61px; background: #2b323e; clip-path: polygon(0 0, 100% 0, 96% 86%, 90% 100%, 10% 100%, 4% 86%); }
.layouts .on { width: 57px; background: #3b4453; color: #fff; font-weight: 700; }
.layouts .add { width: 28px; height: 16px; }
.modes { display: flex; gap: 2px; padding: 1px 3px 0 0; height: 25px; }
.set { display: flex; align-items: center; background: #3a4352; }
.set button { width: 24px; height: 24px; }
.set .act { width: 22px; background: #5f8ec4; margin: 0 1px; }
.set .dd { width: 16px; }
.set .label { width: 47px; }
.set .scale { width: 34px; gap: 4px; }
```
FILE: wireframe.js
```js
// Builds a triangulated sheet: near-vertical columns joined by staggered diagonals.
function sheet(id, count, xAt, top, bottom, step) {
  const half = step / 2;
  let d = "";
  const pt = (k, y) => xAt(k, y).toFixed(1) + " " + y;
  for (let k = 0; k < count; k++) {
    d += "M" + pt(k, top) + "L" + pt(k, bottom);
    for (let y = top + (k % 2) * half; y < bottom; y += step) {
      d += "M" + pt(k + 1, y - half) + "L" + pt(k, y) + "L" + pt(k + 1, y + half);
    }
  }
  document.getElementById(id).setAttribute("d", d);
}

const drop = y => y - 373;
sheet("front", 30, (k, y) => 889 + (k < 12 ? 4.5 * k : 54 + 6.5 * (k - 12)) + drop(y) * Math.min(0.08, -0.07 + 0.008 * k), 361, 830, 12);
sheet("back", 10, (k, y) => 891 - drop(y) * 0.069 + k * 4.5, 373, 800, 10);
sheet("fold", 5, (k, y) => 901 + k * 4 + drop(y) * 0.004, 400, 860, 10);
sheet("side", 4, (k, y) => 911 + k * 7 + drop(y) * 0.01, 470, 740, 10);
```
